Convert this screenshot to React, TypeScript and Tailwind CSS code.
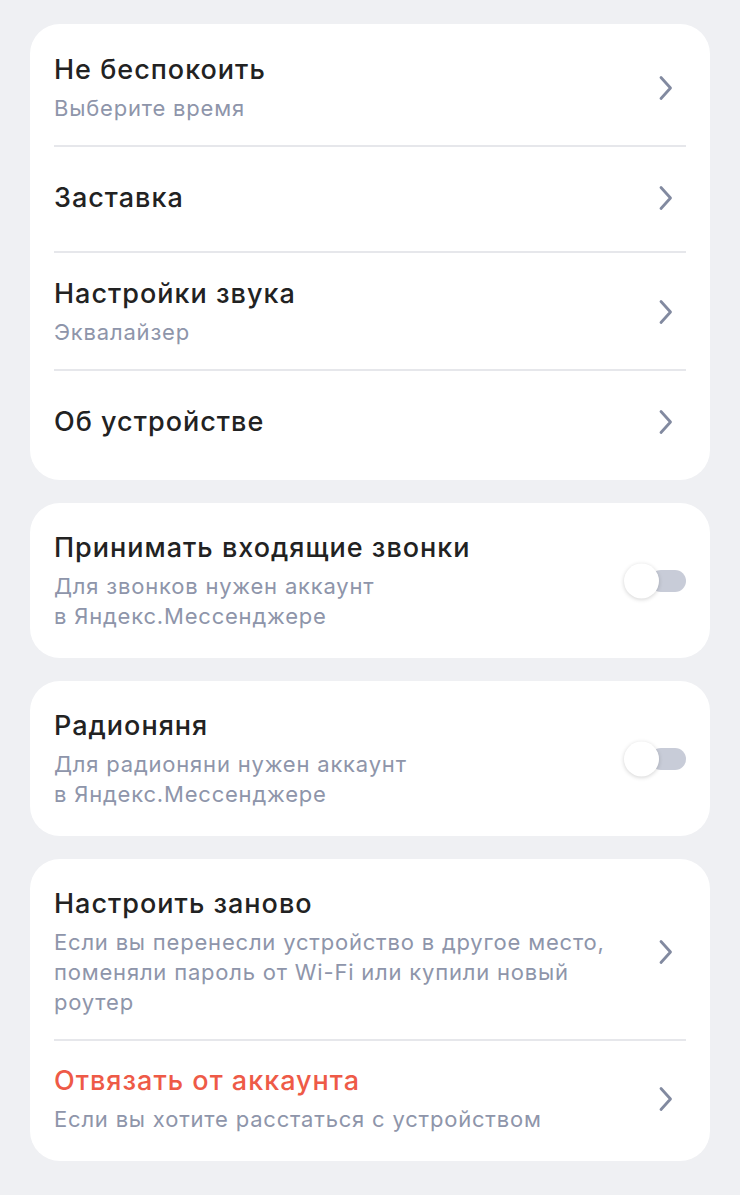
type Row = {
  title: string;
  sub?: string[];
  danger?: boolean;
  pad: string;
};

const Chevron = () => (
  <svg width="16" height="26" viewBox="0 0 16 26" className="shrink-0" fill="none">
    <path d="M3 2.5 L12.5 13 L3 23.5" stroke="#828aa0" strokeWidth="2.8" strokeLinecap="round" strokeLinejoin="round" />
  </svg>
);

const Toggle = () => (
  <div className="relative h-[22px] w-[62px] shrink-0">
    <div className="absolute right-0 top-0 h-[22px] w-[36px] rounded-full bg-[#c8ccd8]" />
    <div className="absolute left-0 top-1/2 h-[35px] w-[35px] -translate-y-1/2 rounded-full bg-white shadow-[0_1px_4px_rgba(0,0,0,0.18)]" />
  </div>
);

const Text = ({ title, sub, danger }: { title: string; sub?: string[]; danger?: boolean }) => (
  <div className="flex flex-col">
    <div
      className={
        "text-[27px] font-medium leading-[34px] tracking-[1px] " +
        (danger ? "text-[#ee5a47]" : "text-[#222222]")
      }
    >
      {title}
    </div>
    {sub && (
      <div className="mt-[6px] text-[22px] leading-[30px] tracking-[0.8px] text-[#8e95aa]">
        {sub.map((s) => (
          <div key={s}>{s}</div>
        ))}
      </div>
    )}
  </div>
);

const ListCard = ({ rows }: { rows: Row[] }) => (
  <div className="rounded-[30px] bg-white px-[24px]">
    {rows.map((r, i) => (
      <div
        key={r.title}
        className={
          "flex items-center justify-between " +
          r.pad +
          (i < rows.length - 1 ? " border-b-2 border-[#e6e7eb]" : "")
        }
      >
        <Text title={r.title} sub={r.sub} danger={r.danger} />
        <div className="mr-[12px]">
          <Chevron />
        </div>
      </div>
    ))}
  </div>
);

const ToggleCard = ({ title, sub }: { title: string; sub: string[] }) => (
  <div className="flex items-center justify-between rounded-[30px] bg-white px-[24px] pb-[27px] pt-[28px]">
    <Text title={title} sub={sub} />
    <Toggle />
  </div>
);

export default function App() {
  return (
    <div
      className="flex min-h-[1195px] w-[740px] flex-col gap-[23px] bg-[#eff0f3] px-[30px] pt-[24px]"
      style={{ fontFamily: "Inter, Roboto, 'Noto Sans', sans-serif" }}
    >
      <ListCard
        rows={[
          { title: "Не беспокоить", sub: ["Выберите время"], pad: "pt-[29px] pb-[22px]" },
          { title: "Заставка", pad: "pt-[34px] pb-[36px]" },
          { title: "Настройки звука", sub: ["Эквалайзер"], pad: "pt-[24px] pb-[22px]" },
          { title: "Об устройстве", pad: "pt-[34px] pb-[41px]" },
        ]}
      />
      <ToggleCard title="Принимать входящие звонки" sub={["Для звонков нужен аккаунт", "в Яндекс.Мессенджере"]} />
      <ToggleCard title="Радионяня" sub={["Для радионяни нужен аккаунт", "в Яндекс.Мессенджере"]} />
      <ListCard
        rows={[
          {
            title: "Настроить заново",
            sub: [
              "Если вы перенесли устройство в другое место,",
              "поменяли пароль от Wi-Fi или купили новый",
              "роутер",
            ],
            pad: "pt-[28px] pb-[22px]",
          },
          {
            title: "Отвязать от аккаунта",
            sub: ["Если вы хотите расстаться с устройством"],
            danger: true,
            pad: "pt-[23px] pb-[27px]",
          },
        ]}
      />
    </div>
  );
}
